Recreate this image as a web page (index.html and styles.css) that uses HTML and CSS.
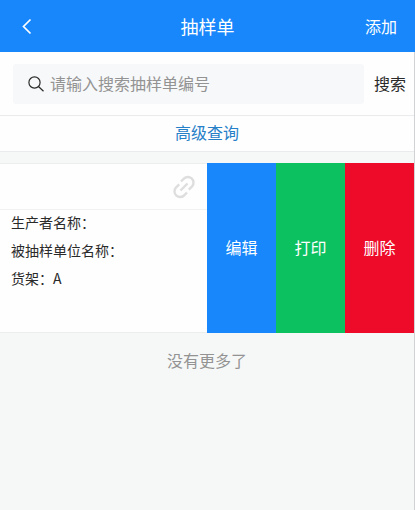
FILE: index.html
```html
<!DOCTYPE html>
<html lang="zh-CN">
<head>
  <meta charset="UTF-8">
  <meta name="viewport" content="width=device-width, initial-scale=1">
  <title>抽样单</title>
  <link rel="stylesheet" href="styles.css">
</head>
<body>
  <header class="navbar">
    <button class="nav-back" type="button" aria-label="返回">
      <svg width="16" height="18" viewBox="0 0 16 18" fill="none" stroke="currentColor" stroke-width="1.7">
        <path d="M12.5 2.500 5.500 9.500l7 7"/>
      </svg>
    </button>
    <h1 class="nav-title">抽样单</h1>
    <button class="nav-add" type="button">添加</button>
  </header>

  <main class="page">
    <form class="search-bar">
      <label class="search-box">
        <svg class="search-icon" width="18" height="18" viewBox="0 0 18 18" fill="none" stroke="currentColor" stroke-width="1.2">
          <circle cx="7.5" cy="7.5" r="5.6"/>
          <path d="M11.5 11.5 16.5 16.3"/>
        </svg>
        <input class="search-input" type="text" placeholder="请输入搜索抽样单编号" aria-label="搜索抽样单编号">
      </label>
      <button class="search-btn" type="button">搜索</button>
    </form>

    <div class="advanced">
      <a href="#">高级查询</a>
    </div>

    <section class="swipe-item">
      <div class="item-content">
        <div class="item-head">
          <svg class="link-icon" width="26" height="26" viewBox="0 0 26 26" fill="none" stroke="currentColor" stroke-width="2.4">
            <path d="M10 7.500L12.600 4.900a5.600 5.600 0 0 1 8.500 7.500L17.800 15.700"/>
            <path d="M16 18.500L13.400 21.100a5.600 5.600 0 0 1-8.500-7.500L8.200 10.300"/>
            <path d="M9.500 16.500l7-7"/>
          </svg>
        </div>
        <div class="item-body">
          <p>生产者名称：</p>
          <p>被抽样单位名称：</p>
          <p>货架：A</p>
        </div>
      </div>
      <div class="item-actions">
        <button class="action edit" type="button">编辑</button>
        <button class="action print" type="button">打印</button>
        <button class="action delete" type="button">删除</button>
      </div>
    </section>

    <p class="no-more">没有更多了</p>
  </main>
</body>
</html>
```

FILE: styles.css
```css
* {
  box-sizing: border-box;
  margin: 0;
  padding: 0;
}

body {
  display: flex;
  flex-direction: column;
  min-height: 100vh;
  font-family: "Noto Sans CJK SC", sans-serif;
  font-size: 16px;
  line-height: 24px;
  color: #2a2a2a;
  background: #f6f8f8;
}

button,
input {
  font: inherit;
  color: inherit;
  background: none;
  border: none;
}

button {
  cursor: pointer;
}

svg {
  display: block;
}

/* top bar */
.navbar {
  display: grid;
  grid-template-columns: 1fr auto 1fr;
  align-items: center;
  height: 52px;
  padding: 0 18px;
  color: #fff;
  background: #1787fb;
}

.nav-back {
  justify-self: start;
}

.nav-title {
  font-size: 18px;
  font-weight: 400;
}

.nav-add {
  justify-self: end;
}

.page {
  flex: 1;
  border-right: 1px solid #d0d2d3;
}

/* search */
.search-bar {
  display: flex;
  align-items: center;
  gap: 10px;
  padding: 12px 8px 11px 13px;
  background: #fefefe;
}

.search-box {
  display: flex;
  flex: 1;
  align-items: center;
  gap: 5px;
  height: 40px;
  padding: 0 14px;
  background: #f7f8f9;
  border-radius: 3px;
}

.search-icon {
  flex: none;
}

.search-input {
  flex: 1;
  min-width: 0;
  height: 24px;
  margin-bottom: 2px;
  outline: none;
}

.search-input::placeholder {
  color: #939393;
}

.search-btn {
  margin-bottom: 2px;
}

.advanced {
  padding: 4px 0 7px;
  text-align: center;
  background: #fefefe;
  border-top: 1px solid #e9ebec;
  border-bottom: 1px solid #e9ebec;
}

.advanced a {
  color: #2680c8;
  text-decoration: none;
}

/* list item, swiped open */
.swipe-item {
  display: grid;
  grid-template-columns: 1fr 1fr;
  margin-top: 11px;
}

.item-content {
  background: #fefefe;
  border-top: 1px solid #eceeee;
  border-bottom: 1px solid #eceeee;
}

.item-head {
  display: flex;
  justify-content: flex-end;
  padding: 10px 10px 9px;
  border-bottom: 1px solid #f0f2f2;
}

.link-icon {
  color: #dedede;
}

.item-body {
  display: grid;
  gap: 4px;
  padding: 0 11px 42px;
  font-size: 14px;
}

.item-actions {
  display: grid;
  grid-template-columns: repeat(3, 1fr);
}

.action {
  padding-bottom: 2px;
  color: #fff;
}

.edit {
  background: #1787fb;
}

.print {
  background: #0cc160;
}

.delete {
  background: #ee0b29;
}

.no-more {
  padding: 15px 0;
  text-align: center;
  color: #939393;
}
```
